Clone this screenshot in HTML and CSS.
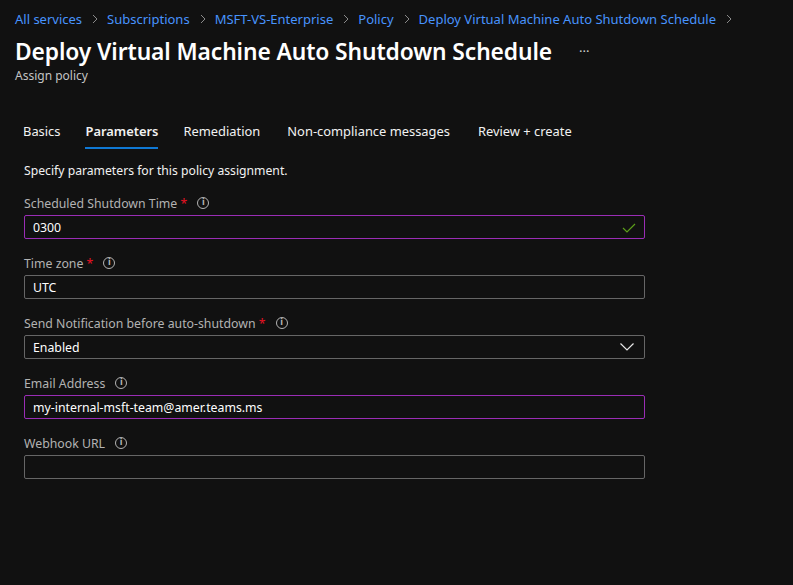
FILE: index.html
```html
<!DOCTYPE html>
<html>
<head>
<meta charset="utf-8">
<link rel="stylesheet" href="styles.css">
</head>
<body>
<div class="page">
  <nav class="crumbs">
    <a>All services</a><span class="sep"><svg width="8" height="10" viewBox="0 0 8 10"><path d="M2 1l4 4-4 4" fill="none" stroke="#8a8a8a" stroke-width="1"/></svg></span>
    <a>Subscriptions</a><span class="sep"><svg width="8" height="10" viewBox="0 0 8 10"><path d="M2 1l4 4-4 4" fill="none" stroke="#8a8a8a" stroke-width="1"/></svg></span>
    <a>MSFT-VS-Enterprise</a><span class="sep"><svg width="8" height="10" viewBox="0 0 8 10"><path d="M2 1l4 4-4 4" fill="none" stroke="#8a8a8a" stroke-width="1"/></svg></span>
    <a>Policy</a><span class="sep"><svg width="8" height="10" viewBox="0 0 8 10"><path d="M2 1l4 4-4 4" fill="none" stroke="#8a8a8a" stroke-width="1"/></svg></span>
    <a>Deploy Virtual Machine Auto Shutdown Schedule</a><span class="sep"><svg width="8" height="10" viewBox="0 0 8 10"><path d="M2 1l4 4-4 4" fill="none" stroke="#8a8a8a" stroke-width="1"/></svg></span>
  </nav>
  <div class="title-row">
    <h1>Deploy Virtual Machine Auto Shutdown Schedule</h1>
    <span class="more">···</span>
  </div>
  <div class="subtitle">Assign policy</div>

  <div class="tabs">
    <span class="tab">Basics</span>
    <span class="tab active">Parameters</span>
    <span class="tab">Remediation</span>
    <span class="tab">Non-compliance messages</span>
    <span class="tab">Review + create</span>
  </div>

  <div class="form">
    <p class="intro">Specify parameters for this policy assignment.</p>

    <div class="field">
      <label class="label">Scheduled Shutdown Time <span class="req">*</span><span class="info">i</span></label>
      <div class="input focus"><span class="val">0300</span>
        <svg class="check" width="14" height="10" viewBox="0 0 14 10"><path d="M1 5l4 4 8-8" fill="none" stroke="#5c9e1a" stroke-width="1.2"/></svg>
      </div>
    </div>

    <div class="field">
      <label class="label">Time zone <span class="req">*</span><span class="info">i</span></label>
      <div class="input"><span class="val">UTC</span></div>
    </div>

    <div class="field">
      <label class="label">Send Notification before auto-shutdown <span class="req">*</span><span class="info">i</span></label>
      <div class="input"><span class="val">Enabled</span>
        <svg class="chev" width="14" height="8" viewBox="0 0 14 8"><path d="M0.5 0.5l6.5 6.5 6.5-6.5" fill="none" stroke="#e6e6e6" stroke-width="1.2"/></svg>
      </div>
    </div>

    <div class="field">
      <label class="label">Email Address<span class="info">i</span></label>
      <div class="input focus"><span class="val">my-internal-msft-team@amer.teams.ms</span></div>
    </div>

    <div class="field">
      <label class="label">Webhook URL<span class="info">i</span></label>
      <div class="input"><span class="val"></span></div>
    </div>
  </div>
</div>
</body>
</html>
```

FILE: styles.css
```css
* { box-sizing: border-box; }
html, body { margin: 0; padding: 0; background: #111111; }
body {
  font-family: "Noto Sans", "Open Sans", sans-serif;
  color: #ffffff;
  width: 793px;
  height: 585px;
  overflow: hidden;
}
.page { padding: 9px 0 0 15px; }
.crumbs {
  display: flex;
  align-items: center;
  height: 20px;
  font-size: 13px;
  white-space: nowrap;
}
.crumbs a { color: #4894fe; }
.sep { display: inline-flex; align-items: center; padding: 0 8px 0 9px; }
.title-row {
  display: flex;
  align-items: center;
  height: 32px;
  margin-top: 6px;
}
h1 {
  margin: 0;
  font-size: 22.8px;
  font-weight: 600;
  color: #ffffff;
  letter-spacing: -0.1px;
}
.more {
  margin-left: 27px;
  font-size: 13px;
  color: #cfcfcf;
}
.subtitle {
  font-size: 12px;
  color: #c4c4c4;
  height: 18px;
  line-height: 18px;
  margin-top: 0;
}
.tabs {
  display: flex;
  margin-top: 33px;
  margin-left: 8px;
}
.tab {
  font-size: 12.9px;
  color: #f2f2f2;
  padding: 3px 0 6px;
  margin-right: 25px;
  border-bottom: 2px solid transparent;
  line-height: 20px;
}
.tab:nth-child(3) { margin-right: 27px; }
.tab:nth-child(4) { margin-right: 28px; }
.tab.active { font-weight: 600; border-bottom-color: #0f78d4; }
.form { margin-left: 9px; width: 621px; }
.intro {
  margin: 13px 0 0;
  font-size: 12.2px;
  line-height: 18px;
  color: #f2f2f2;
}
.field { margin-top: 14px; }
.field:first-of-type { margin-top: 13px; }
.label {
  display: flex;
  align-items: center;
  height: 20px;
  font-size: 12.3px;
  color: #b3b3b3;
  white-space: pre;
}
.req { color: #e81123; }
.info {
  display: inline-flex;
  align-items: center;
  justify-content: center;
  width: 12px;
  height: 12px;
  border: 1px solid #b3b3b3;
  border-radius: 50%;
  font-size: 8px;
  font-weight: 600;
  line-height: 1;
  margin-left: 10px;
  color: #b3b3b3;
  font-family: "DejaVu Sans", sans-serif;
}
.input {
  margin-top: 2px;
  height: 24px;
  border: 1px solid #666666;
  border-radius: 2px;
  display: flex;
  align-items: center;
  justify-content: space-between;
  padding: 0 10px 0 8px;
}
.input.focus { border-color: #9a2db6; }
.val {
  font-size: 12.3px;
  color: #ffffff;
}
.check { margin-right: -2px; margin-top: 1px; }
```
